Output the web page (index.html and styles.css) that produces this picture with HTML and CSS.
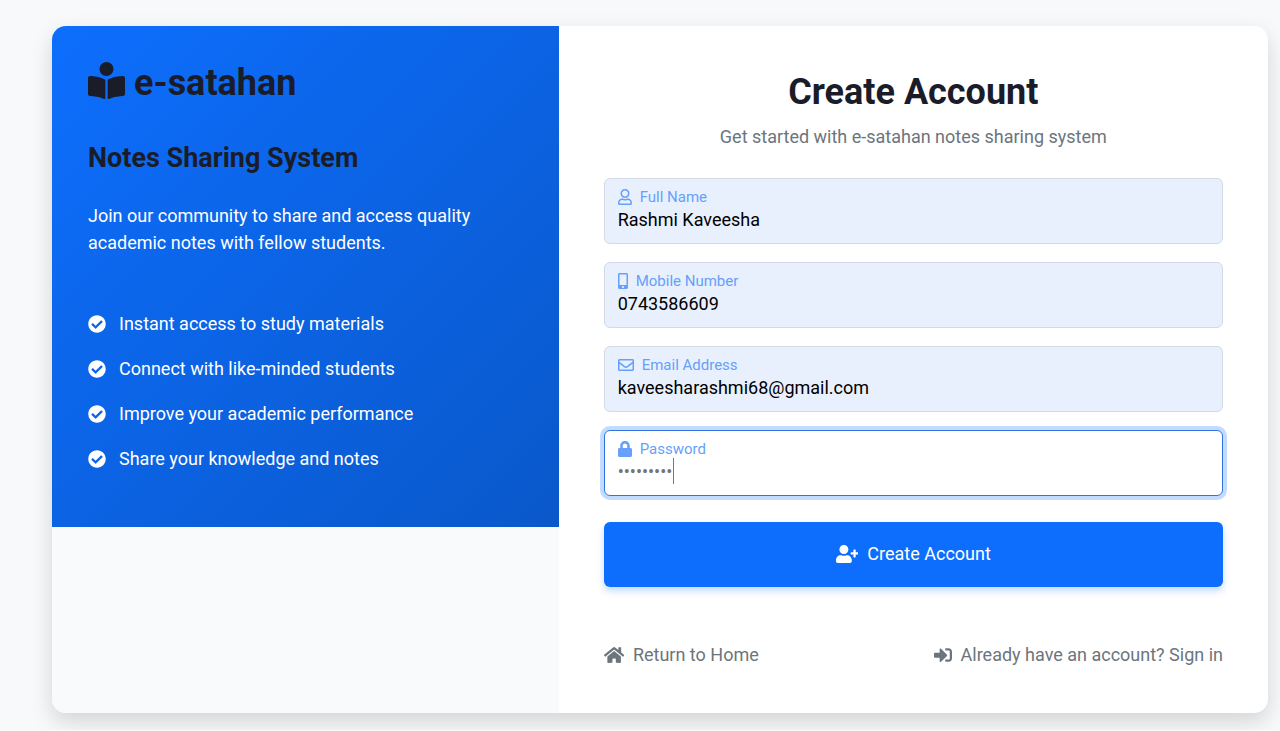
FILE: index.html
```html
<!DOCTYPE html>
<html lang="en">
<head>
<meta charset="utf-8">
<meta name="viewport" content="width=device-width, initial-scale=1">
<title>Create Account - e-satahan</title>
<link rel="stylesheet" href="styles.css">
</head>
<body>
<main class="card">
  <aside class="side">
    <div class="promo">
      <h1 class="brand">
        <svg class="brand-icon" viewBox="0 0 512 512" aria-hidden="true"><path d="M352 96c0-53.02-42.98-96-96-96s-96 42.98-96 96 42.98 96 96 96 96-42.98 96-96zM233.59 241.1c-59.33-36.32-155.43-46.3-203.79-49.05C13.55 191.13 0 203.51 0 219.14v222.8c0 14.33 11.59 26.28 26.49 27.05 43.66 2.29 131.99 10.68 193.04 41.43 9.37 4.72 20.48-1.71 20.48-11.87V252.56c-.01-4.67-2.32-8.95-6.42-11.46zm248.61-49.05c-48.35 2.74-144.46 12.73-203.78 49.05-4.1 2.51-6.41 6.96-6.41 11.63v245.79c0 10.19 11.14 16.63 20.54 11.9 61.04-30.72 149.32-39.11 192.97-41.4 14.9-.78 26.49-12.73 26.49-27.06V219.14c-.01-15.63-13.56-28.01-29.8-27.09z"/></svg>
        e-satahan
      </h1>
      <h2 class="tagline">Notes Sharing System</h2>
      <p class="lead">Join our community to share and access quality academic notes with fellow students.</p>
      <ul class="features">
        <li><svg class="check" viewBox="0 0 512 512" aria-hidden="true"><use href="#check"/></svg>Instant access to study materials</li>
        <li><svg class="check" viewBox="0 0 512 512" aria-hidden="true"><use href="#check"/></svg>Connect with like-minded students</li>
        <li><svg class="check" viewBox="0 0 512 512" aria-hidden="true"><use href="#check"/></svg>Improve your academic performance</li>
        <li><svg class="check" viewBox="0 0 512 512" aria-hidden="true"><use href="#check"/></svg>Share your knowledge and notes</li>
      </ul>
    </div>
  </aside>

  <section class="main">
    <h2 class="title">Create Account</h2>
    <p class="subtitle">Get started with e-satahan notes sharing system</p>
    <form>
      <div class="field">
        <label for="name"><svg viewBox="0 0 448 512" aria-hidden="true"><path d="M313.6 304c-28.7 0-42.5 16-89.6 16-47.1 0-60.8-16-89.6-16C60.2 304 0 364.2 0 438.4V464c0 26.5 21.5 48 48 48h352c26.5 0 48-21.5 48-48v-25.6c0-74.2-60.2-134.4-134.4-134.4zM400 464H48v-25.6c0-47.6 38.8-86.4 86.4-86.4 14.6 0 38.3 16 89.6 16 51.7 0 74.9-16 89.6-16 47.6 0 86.4 38.8 86.4 86.4V464zM224 288c79.5 0 144-64.5 144-144S303.5 0 224 0 80 64.5 80 144s64.5 144 144 144zm0-240c52.9 0 96 43.1 96 96s-43.1 96-96 96-96-43.1-96-96 43.1-96 96-96z"/></svg>Full Name</label>
        <input class="filled" id="name" type="text" value="Rashmi Kaveesha">
      </div>
      <div class="field">
        <label for="mobile"><svg viewBox="0 0 320 512" aria-hidden="true"><path d="M272 0H48C21.5 0 0 21.5 0 48v416c0 26.5 21.5 48 48 48h224c26.5 0 48-21.5 48-48V48c0-26.5-21.5-48-48-48zM160 480c-17.7 0-32-14.3-32-32s14.3-32 32-32 32 14.3 32 32-14.3 32-32 32zm112-108c0 6.6-5.4 12-12 12H60c-6.6 0-12-5.4-12-12V60c0-6.6 5.4-12 12-12h200c6.6 0 12 5.4 12 12v312z"/></svg>Mobile Number</label>
        <input class="filled" id="mobile" type="tel" value="0743586609">
      </div>
      <div class="field">
        <label for="email"><svg viewBox="0 0 512 512" aria-hidden="true"><path d="M464 64H48C21.49 64 0 85.49 0 112v288c0 26.51 21.49 48 48 48h416c26.51 0 48-21.49 48-48V112c0-26.51-21.49-48-48-48zm0 48v40.805c-22.422 18.259-58.168 46.651-134.587 106.49-16.841 13.247-50.201 45.072-73.413 44.701-23.208.375-56.579-31.459-73.413-44.701C106.18 199.465 70.425 171.067 48 152.805V112h416zM48 400V214.398c22.914 18.251 55.409 43.862 104.938 82.646 21.857 17.205 60.134 55.186 103.062 54.955 42.717.231 80.509-37.199 103.053-54.947 49.528-38.783 82.032-64.401 104.947-82.653V400H48z"/></svg>Email Address</label>
        <input class="filled" id="email" type="email" value="kaveesharashmi68@gmail.com">
      </div>
      <div class="field">
        <label for="password"><svg viewBox="0 0 448 512" aria-hidden="true"><path d="M400 224h-24v-72C376 68.2 307.8 0 224 0S72 68.2 72 152v72H48c-26.5 0-48 21.5-48 48v192c0 26.5 21.5 48 48 48h352c26.5 0 48-21.5 48-48V272c0-26.5-21.5-48-48-48zm-104 0H152v-72c0-39.7 32.3-72 72-72s72 32.3 72 72v72z"/></svg>Password</label>
        <input class="active" id="password" type="password" value="notes1234">
        <span class="caret" aria-hidden="true"></span>
      </div>
      <button class="submit" type="submit"><svg viewBox="0 0 640 512" aria-hidden="true"><path d="M624 208h-64v-64c0-8.8-7.2-16-16-16h-32c-8.8 0-16 7.2-16 16v64h-64c-8.8 0-16 7.2-16 16v32c0 8.8 7.2 16 16 16h64v64c0 8.8 7.2 16 16 16h32c8.8 0 16-7.2 16-16v-64h64c8.8 0 16-7.2 16-16v-32c0-8.8-7.2-16-16-16zm-400 48c70.7 0 128-57.3 128-128S294.7 0 224 0 96 57.3 96 128s57.3 128 128 128zm89.6 32h-16.7c-22.2 10.2-46.9 16-72.9 16s-50.6-5.8-72.9-16h-16.7C60.2 288 0 348.2 0 422.4V464c0 26.5 21.5 48 48 48h352c26.5 0 48-21.5 48-48v-41.6c0-74.2-60.2-134.4-134.4-134.4z"/></svg>Create Account</button>
    </form>
    <nav class="links">
      <a href="#home"><svg viewBox="0 0 576 512" aria-hidden="true"><path d="M280.37 148.26L96 300.11V464a16 16 0 0 0 16 16l112.06-.29a16 16 0 0 0 15.92-16V368a16 16 0 0 1 16-16h64a16 16 0 0 1 16 16v95.64a16 16 0 0 0 16 16.05L464 480a16 16 0 0 0 16-16V300L295.67 148.26a12.19 12.19 0 0 0-15.3 0zM571.6 251.47L488 182.56V44.05a12 12 0 0 0-12-12h-56a12 12 0 0 0-12 12v72.61L318.47 43a48 48 0 0 0-61 0L4.34 251.47a12 12 0 0 0-1.6 16.9l25.5 31A12 12 0 0 0 45.15 301l235.22-193.74a12.19 12.19 0 0 1 15.3 0L530.9 301a12 12 0 0 0 16.9-1.6l25.5-31a12 12 0 0 0-1.7-16.93z"/></svg>Return to Home</a>
      <a href="#signin"><svg viewBox="0 0 512 512" aria-hidden="true"><path d="M416 448h-84c-6.6 0-12-5.4-12-12v-40c0-6.6 5.4-12 12-12h84c17.7 0 32-14.3 32-32V160c0-17.7-14.3-32-32-32h-84c-6.6 0-12-5.4-12-12V76c0-6.6 5.4-12 12-12h84c53 0 96 43 96 96v192c0 53-43 96-96 96zm-47-201L201 79c-15-15-41-4.5-41 17v96H24c-13.3 0-24 10.7-24 24v96c0 13.3 10.7 24 24 24h136v96c0 21.5 26 32 41 17l168-168c9.3-9.4 9.3-24.6 0-34z"/></svg>Already have an account? Sign in</a>
    </nav>
  </section>
</main>
<svg class="defs" aria-hidden="true"><defs><path id="check" d="M504 256c0 136.967-111.033 248-248 248S8 392.967 8 256 119.033 8 256 8s248 111.033 248 248zM227.314 387.314l184-184c6.248-6.248 6.248-16.379 0-22.627l-22.627-22.627c-6.248-6.249-16.379-6.249-22.628 0L216 308.118l-70.059-70.059c-6.248-6.248-16.379-6.248-22.628 0l-22.627 22.627c-6.248 6.248-6.248 16.379 0 22.627l104 104c6.249 6.249 16.379 6.249 22.628.001z"/></defs></svg>
</body>
</html>
```
FILE: styles.css
```css
* { box-sizing: border-box; }

body {
  margin: 0;
  padding: 26px 12px 17px 52px;
  background: #f8f9fb;
  color: #1a1d29;
  font-family: Roboto, "Liberation Sans", sans-serif;
  font-size: 18px;
  line-height: 27px;
}

h1, h2, p, ul { margin: 0; }

svg { fill: currentColor; flex: none; }

.defs { position: absolute; width: 0; height: 0; }

.card {
  display: grid;
  grid-template-columns: 5fr 7fr;
  border-radius: 14px;
  overflow: hidden;
  background: #fff;
  box-shadow: 0 9px 22px rgba(0, 0, 0, 0.15);
}

.side { background: #f8fafc; }

.promo {
  padding: 36px 36px 55px;
  background: linear-gradient(135deg, #0d6efd, #0a58ca);
  color: #fff;
}

.brand {
  display: flex;
  align-items: flex-start;
  gap: 9px;
  margin-bottom: 37px;
  color: #1a1d29;
  font-size: 36px;
  line-height: 43px;
  font-weight: 700;
}

.brand-icon { width: 37px; height: 37px; }

.tagline {
  margin-bottom: 28px;
  color: #1a1d29;
  font-size: 27px;
  line-height: 32px;
  font-weight: 700;
}

.lead { margin-bottom: 54px; }

.features {
  display: grid;
  gap: 18px;
  padding: 0;
  list-style: none;
}

.features li { display: flex; align-items: center; gap: 13px; }

.check { width: 18px; height: 18px; }

.main { padding: 45px; }

.title {
  margin-bottom: 9px;
  font-size: 36px;
  line-height: 43px;
  font-weight: 700;
  text-align: center;
}

.subtitle {
  margin-bottom: 28px;
  color: #6c757d;
  text-align: center;
}

.field { position: relative; margin-bottom: 18px; }

.field label {
  position: absolute;
  top: 10px;
  left: 14px;
  display: flex;
  align-items: center;
  gap: 8px;
  color: #679ffa;
  font-size: 15px;
  line-height: 18px;
}

.field svg { height: 16px; }

.field input {
  display: block;
  width: 100%;
  height: 66px;
  padding: 27px 13px 11px;
  border: 1px solid #d3dae5;
  border-radius: 6px;
  outline: 0;
  background: #fff;
  color: #000;
  font: inherit;
}

.field input.filled { background: #e8f0fe; }

.field input.active {
  border-color: #2f74e0;
  box-shadow: 0 0 0 4px #c2dbfe;
  color: #757575;
}

.caret {
  position: absolute;
  top: 28px;
  left: 69px;
  width: 1px;
  height: 26px;
  background: #777;
}

.submit {
  display: flex;
  align-items: center;
  justify-content: center;
  gap: 9px;
  width: 100%;
  margin-top: 26px;
  padding: 18px 18px 20px;
  border: 0;
  border-radius: 6px;
  background: #0d6efd;
  box-shadow: 0 4px 7px rgba(13, 110, 253, 0.25);
  color: #fff;
  font: inherit;
}

.submit svg { height: 18px; }

.links {
  display: flex;
  justify-content: space-between;
  margin-top: 54px;
}

.links a {
  display: flex;
  align-items: center;
  gap: 9px;
  color: #6c757d;
  text-decoration: none;
}

.links svg { height: 18px; }
```
